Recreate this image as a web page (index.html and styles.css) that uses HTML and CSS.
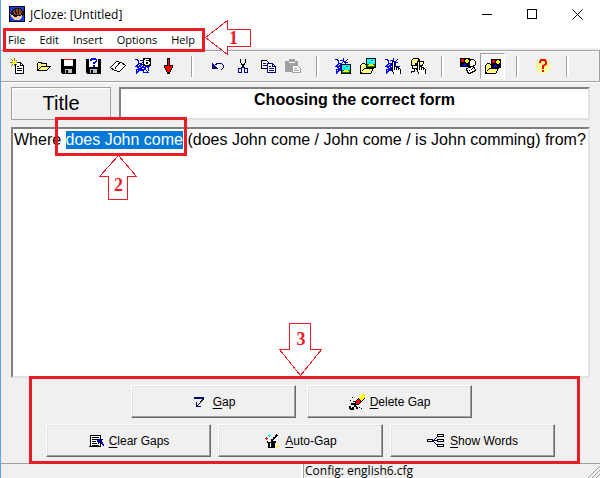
FILE: index.html
```html
<!DOCTYPE html>
<html lang="en">
<head>
  <meta charset="UTF-8" />
  <meta name="viewport" content="width=device-width, initial-scale=1.0"/>
  <title>JCloze: [Untitled]</title>
  <link rel="stylesheet" href="styles.css">
</head>
<body>
  <!-- Shared icon parts -->
  <svg class="sprites" aria-hidden="true">
    <symbol id="web" viewBox="0 0 16 16">
      <path fill="none" stroke="#00f" d="M0 1.5h2l2 2M1.5 14v-2l3-2M3.5 3v3l-2 2 2 2v3M5 2.5h3l2 2h3M8.5 0v3l-2 3 4 2-2 4v3M0 8.5h4l3-3M4 12.5h3l3 2h3M1 15.5l4-4 5-5M3 4l4 4 5 5 2 2M10.5 4v4l3 2v3M11 8.5h4M5.5 5v6h5v-5h-5M13 1l-3 3"/>
    </symbol>
    <symbol id="picture" viewBox="0 0 10 10">
      <path d="M0 0h10v10H0z"/>
      <path fill="#0ff" d="M1 1h8v6H1z"/>
      <path fill="#008080" d="M5 2h2v1H5zM3 4h1v1H3z"/>
      <path fill="#008000" d="M1 6h2v1h4V6h2v3H1z"/>
      <path fill="#ff0" d="M3 6h4v1h1v1H2V7h1z"/>
      <path fill="#fff" d="M7 3h1v1H7z"/>
    </symbol>
    <symbol id="folder" viewBox="0 0 14 14">
      <path d="M1 4h1V3h3v1h5v4h4v1h-1v2h-1v2h-1v1H0V5h1z"/>
      <path fill="#ffff80" d="M2 4h3v1h4v3H4v1H3v1H2v2H1V5h1z"/>
      <path fill="#ffff80" d="M4 9h8v2h-1v2H2v-2h1v-1h1z"/>
    </symbol>
    <symbol id="hand" viewBox="0 0 10 13">
      <path d="M1 0h2v1h1v4h2v1h2v1h1v1h1v5H2v-2H1V9H0V7h1z"/>
      <path fill="#fff" d="M2 1h1v8h1V6h1v3h1V7h1v2h1V8h1v5H3v-2H2z"/>
    </symbol>
    <symbol id="shapes" viewBox="0 0 10 9">
      <path d="M0 0h10v9H0z"/>
      <path fill="#f00" d="M1 1h3v3H1z"/>
      <path fill="#ff0" d="M6 1h2v1h1v2H8v1H6V4H5V2h1z"/>
      <path fill="#00f" d="M4 5h1v1h1v1h1v1H2V7h1V6h1z"/>
    </symbol>
  </svg>

  <header class="titlebar">
    <svg class="app-icon" viewBox="0 0 16 16">
      <path d="M0 0h16v16H0z"/>
      <path fill="#1040ff" d="M1 1h14v14H1z"/>
      <path fill="#201008" d="M2 5l5-3h5l3 4v3l-3 2H4L2 8z"/>
      <path fill="#8b4a20" d="M4 5l4-2h3l2 3-1 3H6z"/>
      <path fill="none" stroke="#201008" d="M6 4l2 5M9 3l1 5"/>
      <path fill="#f4c9a0" d="M1 8l2 1 3 2 4-1 3-1v3l-3 2H6l-3-2z"/>
    </svg>
    <h1>JCloze: [Untitled]</h1>
    <div class="window-controls">
      <button aria-label="Minimize"><svg viewBox="0 0 11 11"><path d="M0 5.5h10"/></svg></button>
      <button aria-label="Maximize"><svg viewBox="0 0 11 11"><path d="M.5.5h9v9h-9z"/></svg></button>
      <button aria-label="Close"><svg class="smooth" viewBox="0 0 11 11"><path d="M.5.5l10 10M10.5.5l-10 10"/></svg></button>
    </div>
  </header>

  <nav class="menu">
    <button>File</button>
    <button>Edit</button>
    <button>Insert</button>
    <button>Options</button>
    <button>Help</button>
  </nav>

  <div class="toolbar">
    <button aria-label="New"><svg viewBox="0 0 16 16">
      <path fill="#fff" stroke="#000" d="M5.5 15.5v-11h5l3 3v8z"/>
      <path fill="none" stroke="#000" d="M10.5 4v3.5h3M7 8.5h2M7 10.5h5M7 12.5h5"/>
      <path fill="none" stroke="#808000" d="M1 1l6 6M4.5 0v8M0 4.5h8M1 8l6-6"/>
      <path fill="#ff0" d="M3 3h3v3H3z"/>
    </svg></button>
    <button aria-label="Open"><svg viewBox="0 0 16 16">
      <path d="M3 4h4v1h5v3h4v1h-1v1h-1v1h-1v1h-1v1H2V5h1z"/>
      <path fill="#ffff80" d="M4 5h2v1h5v2H6v1H5v1H4v1H3V5z"/>
      <path fill="#ffff80" d="M6 9h8v1h-1v1h-1v1H4v-1h1v-1h1z"/>
    </svg></button>
    <button aria-label="Save"><svg viewBox="0 0 16 16">
      <path d="M1 1h15v15H2l-1-1z"/>
      <path fill="#fff" d="M4 2h9v6H4z"/><path fill="#f00" d="M4 1h9v1H4z"/>
      <path fill="#c0c0c0" d="M5 11h7v4H5z"/><path d="M6 12h2v3H6z"/>
    </svg></button>
    <button aria-label="Save as"><svg viewBox="0 0 16 16">
      <path d="M1 1h15v15H2l-1-1z"/>
      <path fill="#fff" d="M4 0h9v9H4z"/>
      <path fill="#00f" d="M5 1h1V0h5v1h1v3h-1v1h-1v1H8V4h2V3h1V2H7v1H5zM8 7h2v2H8z"/>
      <path fill="#c0c0c0" d="M5 11h7v4H5z"/><path d="M6 12h2v3H6z"/>
    </svg></button>
    <button aria-label="Add to collection"><svg viewBox="0 0 16 16">
      <path fill="#fff" stroke="#000" d="M.5 9.5l6-6h2l1 1h2l4 3-6 6h-2l-1-1h-2l-4-3z"/>
      <path fill="none" stroke="#000" d="M5 10.5l5-6"/>
    </svg></button>
    <button aria-label="Export to web"><svg viewBox="0 0 16 16">
      <use href="#web" width="16" height="16"/>
      <path d="M8 0h8v8H8z"/>
      <path fill="#fff" d="M10 1h4v1h-3v1h3v1h1v2h-1v1h-4V6H9V2h1zM11 4v2h2V4z" fill-rule="evenodd"/>
    </svg></button>
    <button aria-label="Export down"><svg viewBox="0 0 16 16">
      <path d="M7 0h3v7h3v3h-1v2h-1v2h-1v2H7v-2H6v-2H5v-2H4V7h3z"/>
      <path fill="#f00" d="M8 1h1v7h3v2h-1v2h-1v2H7v-2H6v-2H5V8h3z"/>
    </svg></button>
    <span class="divider"></span>
    <button aria-label="Undo"><svg viewBox="0 0 16 16">
      <path fill="none" stroke="#000080" d="M4 8l4-3h3l2 2v3l-2 2"/>
      <path fill="#000080" d="M2 5v6h6z"/>
    </svg></button>
    <button aria-label="Cut"><svg viewBox="0 0 16 16">
      <path fill="none" stroke="#000" d="M5.5 1v3l3 5M10.5 1v3l-3 5"/>
      <path fill="none" stroke="#000080" d="M7.5 9l-1 1h-2l-1 1v3h3v-4M8.5 9l1 1h2l1 1v3h-3v-4"/>
    </svg></button>
    <button aria-label="Copy"><svg viewBox="0 0 16 16">
      <path fill="#fff" stroke="#000" d="M1.5 2.5h5l2 2v6h-7z"/>
      <path fill="none" stroke="#000080" d="M3 5.5h3M3 7.5h4"/>
      <path fill="#fff" stroke="#000080" d="M7.5 5.5h5l3 3v6h-8z"/>
      <path fill="none" stroke="#000080" d="M12.5 6v2.5H15M9 8.5h2M9 10.5h5M9 12.5h5"/>
    </svg></button>
    <button aria-label="Paste" disabled><svg viewBox="0 0 16 16">
      <path fill="#a0a0a0" d="M0 3h4V1h6v2h3v5H8v6H0z"/>
      <path fill="#fff" d="M4 4h6v1H4z"/>
      <path fill="#fff" stroke="#a0a0a0" d="M7.5 7.5h5l3 3v4h-8z"/>
      <path fill="none" stroke="#a0a0a0" d="M9 10.5h3M9 12.5h5"/>
    </svg></button>
    <span class="divider"></span>
    <button aria-label="Insert web picture"><svg viewBox="0 0 16 16">
      <use href="#web" width="16" height="16"/>
      <use href="#picture" x="6" y="6" width="10" height="10"/>
    </svg></button>
    <button aria-label="Insert local picture"><svg viewBox="0 0 16 16">
      <use href="#folder" y="2" width="14" height="14"/>
      <use href="#picture" x="6" width="10" height="10"/>
    </svg></button>
    <button aria-label="Insert web link"><svg viewBox="0 0 16 16">
      <use href="#web" width="16" height="16"/>
      <use href="#hand" x="6" y="3" width="10" height="13"/>
    </svg></button>
    <button aria-label="Insert file link"><svg viewBox="0 0 16 16">
      <path d="M2 1h1V0h6v1h1v2h4v3h-1v2H1V2h1z"/>
      <path fill="#ffff80" d="M3 1h5v2h1v1h4v2h-1v1H7V5H5v2H2V2h1z"/>
      <path fill="none" stroke="#000" d="M2.5 8v2h3M1.5 15v-2h3v-2"/>
      <use href="#hand" x="6" y="3" width="10" height="13"/>
    </svg></button>
    <span class="divider"></span>
    <button aria-label="Insert web media"><svg viewBox="0 0 16 16">
      <path fill="#fff" stroke="#000" d="M9.5 2.5l2-1h2l2 2v3l-3 2h-3zM6.5 10.5l6-2 2 1 1 3-6 3-2-1z"/>
      <path fill="none" stroke="#000" d="M9 12.5h1M11 11.5h1M12 10.5h1"/>
      <use href="#shapes" width="10" height="9"/>
    </svg></button>
    <button class="pressed" aria-label="Insert local media"><svg viewBox="0 0 16 16">
      <use href="#folder" y="2" width="14" height="14"/>
      <use href="#shapes" x="6" y="1" width="10" height="9"/>
    </svg></button>
    <span class="divider"></span>
    <button aria-label="Help"><svg class="smooth" viewBox="0 0 16 16">
      <circle cx="8" cy="8" r="7.5" fill="#ffffa0"/>
      <path fill="none" stroke="#f00" stroke-width="2" d="M5 5V4l1-2h4l1 2v2L8 8v3M7 13h2"/>
    </svg></button>
    <span class="divider"></span>
  </div>

  <main class="work">
    <div class="title-row">
      <button class="title-btn" id="title-label">Title</button>
      <input class="title-input" type="text" value="Choosing the correct form" aria-labelledby="title-label">
    </div>
    <textarea class="text" id="text" aria-label="Exercise text" spellcheck="false">Where does John come (does John come / John come / is John comming) from?</textarea>

    <div class="actions">
      <div class="actions-row main-row">
        <button><svg viewBox="0 0 16 16">
          <path fill="#000080" d="M2 3h10v2H2z"/>
          <path fill="none" stroke="#000" d="M11.5 5L5 12"/>
          <path fill="none" stroke="#000080" d="M4.5 8v4.5H9"/>
        </svg><span><u>G</u>ap</span></button>
        <button><svg viewBox="0 0 16 16">
          <path d="M12 1h4v3l-7 7H6V7z"/>
          <path fill="#ff0" d="M13 0h3v3l-4 4-2-3z"/>
          <path fill="#f00" d="M9 5l3 2-3 3H7V7z"/>
          <path fill="none" stroke="#000" stroke-width="2" d="M2 10h3l2 3M1 15v-3M1 15h3v-2M7 14h2"/>
          <path d="M3 3h1v1H3zM1 6h1v1H1zM4 7h2v1H4zM10 13h1v1h-1zM12 14h1v1h-1z"/>
        </svg><span><u>D</u>elete Gap</span></button>
      </div>
      <div class="actions-row">
        <button><svg viewBox="0 0 16 16">
          <path fill="#fff" stroke="#000" d="M2.5 2.5h10v11h-10z"/>
          <path fill="none" stroke="#000" d="M4 4.5h7M4 6.5h5M4 8.5h4M4 10.5h5M4 12.5h7M1 13.5h12"/>
          <path fill="#0000a0" d="M9 6h6l-2 2 2 2-1 1-2-2-2 2z"/>
          <path fill="none" stroke="#0000a0" d="M13 9l3 4"/>
        </svg><span><u>C</u>lear Gaps</span></button>
        <button><svg viewBox="0 0 16 16">
          <path d="M3 8h9v2h-1v5H4v-5H3z"/>
          <path fill="#fff" d="M6 10h1v4H6zM4 8h3v1H4z"/>
          <path fill="none" stroke="#000" stroke-width="2" d="M7 8l6-6"/>
          <path fill="#fff" d="M8 5h1v1H8zM10 3h1v1h-1z"/>
          <path fill="#f00" d="M2 4h1v1h1v1H3v1H2V6H1V5h1z"/>
          <path fill="#0ff" d="M5 1h1v1h1v1H6v1H5V3H4V2h1z"/>
          <path fill="#ff0" d="M13 12h1v1h1v1h-1v1h-1v-1h-1v-1h1z"/>
        </svg><span><u>A</u>uto-Gap</span></button>
        <button><svg class="wide" viewBox="0 0 18 16">
          <path fill="none" stroke="#000080" d="M6 8l5-5M6 7.5h5M6 8l5 5"/>
          <path fill="#fff" stroke="#000" d="M.5 6.5h5v2h-5zM10.5 1.5h6v2h-6zM10.5 6.5h6v2h-6zM10.5 11.5h6v2h-6z"/>
        </svg><span><u>S</u>how Words</span></button>
      </div>
    </div>
  </main>

  <footer class="status">
    <div class="status-cell hint"></div>
    <div class="status-cell">Config: english6.cfg</div>
    <svg class="grip" viewBox="0 0 12 12"><path d="M0 12L12 0M4 12l8-8M8 12l4-4"/></svg>
  </footer>

  <!-- Numbered callouts over the window -->
  <div class="mark mark-menu"></div>
  <div class="arrow arrow-1">
    <svg viewBox="0 0 47 36"><path d="M.5 17.5l22-17v9h23v17h-23v8z"/></svg>
    <span>1</span>
  </div>
  <div class="mark mark-text"></div>
  <div class="arrow arrow-2">
    <svg viewBox="0 0 39 46"><path d="M19.5.5l18 21h-9v23h-19v-23h-9z"/></svg>
    <span>2</span>
  </div>
  <div class="mark mark-actions"></div>
  <div class="arrow arrow-3">
    <svg viewBox="0 0 44 54"><path d="M10.5.5h21v26h11l-21 26-21-26h10z"/></svg>
    <span>3</span>
  </div>

  <script>
    // select the first gap candidate
    const text = document.getElementById("text");
    const gap = "does John come";
    const start = text.value.indexOf(gap);
    text.focus();
    text.setSelectionRange(start, start + gap.length);
  </script>
</body>
</html>
```
FILE: styles.css
```css
* {
  box-sizing: border-box;
}
body {
  display: flex;
  flex-direction: column;
  position: relative;
  min-height: 100vh;
  margin: 0;
  border-left: 1px solid #5aa5ee;
  background: #f0f0f0;
  color: #000;
  font-family: "Liberation Sans", Arial, sans-serif;
  font-size: 12px;
}
button {
  padding: 0;
  border: none;
  background: none;
  color: inherit;
  font: inherit;
}
svg {
  display: block;
  width: 16px;
  height: 16px;
  flex: none;
  shape-rendering: crispEdges;
}
.smooth { shape-rendering: auto; }
.sprites {
  position: absolute;
  width: 0;
  height: 0;
}

/* Title bar and menu */
.titlebar {
  display: flex;
  align-items: center;
  height: 28px;
  padding-left: 8px;
  background: #fff;
}
.titlebar h1 {
  flex: 1;
  margin: 0 0 0 5px;
  font: 12px "Open Sans", sans-serif;
}
.window-controls {
  display: flex;
}
.window-controls button {
  display: flex;
  justify-content: center;
  width: 45px;
}
.window-controls svg {
  width: 11px;
  height: 11px;
  fill: none;
  stroke: #000;
}
.menu {
  display: flex;
  gap: 14px;
  height: 20px;
  padding: 2px 7px 0;
  background: #fff;
  font: 11px "Open Sans", sans-serif;
}

/* Toolbar */
.toolbar {
  display: flex;
  height: 32px;
  margin-top: 2px;
  padding: 2px 4px;
  border: 1px solid #a0a0a0;
  border-left: none;
  box-shadow: inset 0 1px #fff, 0 1px #fff;
}
.toolbar button,
.divider {
  display: flex;
  align-items: center;
  justify-content: center;
  width: 25px;
}
.divider::before {
  content: "";
  width: 2px;
  height: 21px;
  border-left: 1px solid #a0a0a0;
  background: #fff;
}
.toolbar .pressed {
  border: 1px solid #a0a0a0;
  border-color: #a0a0a0 #fff #fff #a0a0a0;
  background: #f7f7f7;
}

/* Work area */
.work {
  display: flex;
  flex: 1;
  flex-direction: column;
  gap: 7px;
  padding: 5px 10px 6px;
}
.title-row {
  display: flex;
  gap: 8px;
  height: 33px;
}
.title-btn {
  width: 100px;
  border: 1px solid #a0a0a0;
  box-shadow: inset 1px 1px #fff;
  font-size: 20px;
}
.title-input,
.text {
  border: 2px solid;
  border-color: #808080 #e3e3e3 #e3e3e3 #808080;
  border-radius: 0;
  outline: none;
  background: #fff;
  color: #000;
  font: 16px/18px "Liberation Sans", Arial, sans-serif;
}
.title-input {
  flex: 1;
  min-width: 0;
  padding: 0 0 8px;
  font-weight: bold;
  text-align: center;
}
.text {
  flex: 1;
  padding: 2px 1px;
  resize: none;
}
.text::selection {
  background: #0078d7;
  color: #fff;
}

/* Gap buttons */
.actions {
  display: flex;
  flex-direction: column;
  gap: 6px;
}
.actions-row {
  display: flex;
  justify-content: center;
  gap: 7px;
}
.main-row {
  gap: 11px;
  padding-left: 2px;
}
.actions button {
  display: flex;
  align-items: center;
  justify-content: center;
  gap: 5px;
  width: 165px;
  height: 33px;
  border: 1px solid;
  border-color: #fff #696969 #696969 #fff;
  box-shadow: inset -1px -1px #a0a0a0, inset 1px 1px #e3e3e3;
}
.actions u {
  text-underline-offset: 2px;
}
.actions .wide { width: 18px; }

/* Status bar */
.status {
  display: flex;
  position: relative;
  height: 15px;
  border-top: 1px solid #a0a0a0;
  font: 12px/14px "Open Sans", sans-serif;
}
.status-cell {
  flex: 1;
  height: 14px;
  padding-left: 1px;
}
.status-cell + .status-cell {
  border-left: 1px solid #a0a0a0;
  box-shadow: -2px 0 #fff;
}
.status .hint {
  flex: 0 0 302px;
}
.grip {
  position: absolute;
  right: 0;
  bottom: 0;
  width: 12px;
  height: 12px;
  fill: none;
  stroke: #a0a0a0;
}

/* Callouts */
.mark {
  position: absolute;
  border: 3px solid #ed1c24;
  pointer-events: none;
}
.mark-menu { left: 2px; top: 28px; width: 202px; height: 24px; }
.mark-text { left: 54px; top: 117px; width: 132px; height: 39px; }
.mark-actions { left: 28px; top: 376px; right: 20px; height: 88px; }
.arrow {
  display: flex;
  align-items: center;
  justify-content: center;
  position: absolute;
  color: #ed1c24;
  font: bold 18px/18px "Liberation Serif", serif;
  pointer-events: none;
}
.arrow svg {
  position: absolute;
  inset: 0;
  width: 100%;
  height: 100%;
  fill: #fff;
  stroke: #ed1c24;
}
.arrow span {
  position: relative;
}
.arrow-1 { left: 204px; top: 20px; width: 47px; height: 36px; padding-left: 10px; }
.arrow-2 { left: 98px; top: 155px; width: 39px; height: 46px; padding-top: 14px; }
.arrow-3 { left: 278px; top: 323px; width: 44px; height: 54px; padding-bottom: 22px; }
```
